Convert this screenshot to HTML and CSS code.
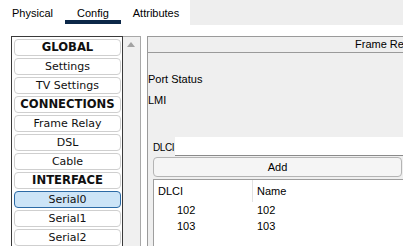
FILE: index.html
```html
<!DOCTYPE html>
<html lang="en">
<head>
    <meta charset="UTF-8">
    <meta name="viewport" content="width=device-width, initial-scale=1.0">
    <title>Router Config</title>
    <link rel="stylesheet" href="styles.css">
</head>
<body>
    <div class="tab-bar">
        <div class="tabs">
            <div class="tab">Physical</div>
            <div class="tab active">Config</div>
            <div class="tab">Attributes</div>
        </div>
    </div>

    <div class="main">
        <div class="side">
            <div class="side-list">
                <div class="side-item heading">GLOBAL</div>
                <div class="side-item">Settings</div>
                <div class="side-item">TV Settings</div>
                <div class="side-item heading">CONNECTIONS</div>
                <div class="side-item">Frame Relay</div>
                <div class="side-item">DSL</div>
                <div class="side-item">Cable</div>
                <div class="side-item heading">INTERFACE</div>
                <div class="side-item selected">Serial0</div>
                <div class="side-item">Serial1</div>
                <div class="side-item">Serial2</div>
            </div>
            <div class="scrollbar">
                <div class="arrow-up"></div>
            </div>
        </div>

        <div class="panel">
            <div class="panel-header">
                <span class="panel-title">Frame Relay</span>
            </div>
            <div class="panel-body">
                <div class="status-row">Port Status</div>
                <div class="status-row">LMI</div>

                <div class="dlci-row">
                    <label class="dlci-label">DLCI</label>
                    <input class="dlci-input" type="text">
                </div>
                <button class="add-btn">Add</button>

                <div class="dlci-table">
                    <div class="table-head">
                        <div class="cell col-dlci">DLCI</div>
                        <div class="cell col-name">Name</div>
                    </div>
                    <div class="table-row">
                        <div class="cell col-dlci num">102</div>
                        <div class="cell col-name">102</div>
                    </div>
                    <div class="table-row">
                        <div class="cell col-dlci num">103</div>
                        <div class="cell col-name">103</div>
                    </div>
                </div>
            </div>
        </div>
    </div>
</body>
</html>
```

FILE: styles.css
```css
body {
    margin: 0;
    width: 403px;
    height: 246px;
    overflow: hidden;
    background-color: #fff;
    font-family: "Liberation Sans", Arial, sans-serif;
    font-size: 11px;
    color: #000;
}

/* tabs */
.tab-bar {
    height: 25px;
    background-color: #eeeeee;
}
.tabs {
    display: flex;
    width: 190px;
    height: 25px;
    background-color: #fff;
}
.tab {
    box-sizing: border-box;
    height: 24px;
    padding: 7px 12px 0;
    line-height: 12px;
}
.tab.active {
    border-bottom: 4px solid #0c2748;
}

.main {
    display: flex;
    margin-top: 11px;
    padding-left: 11px;
    gap: 6px;
}

/* left list */
.side {
    display: flex;
    height: 210px;
}
.side-list {
    box-sizing: border-box;
    width: 112px;
    height: 212px;
    border: 1px solid #3a3a3a;
    border-bottom: none;
    padding: 2px 1px 0 2px;
    background-color: #fff;
    font-family: "DejaVu Sans", Tahoma, sans-serif;
    font-size: 11px;
}
.side-item {
    box-sizing: border-box;
    height: 17px;
    margin-bottom: 2px;
    border: 1px solid #cfcfcf;
    border-radius: 4px;
    text-align: center;
    line-height: 15px;
    color: #101010;
}
.side-item.heading {
    font-weight: bold;
    font-size: 11.6px;
}
.side-item.selected {
    background-color: #cce4f7;
    border-color: #2c6aa5;
}
.scrollbar {
    box-sizing: border-box;
    width: 18px;
    height: 212px;
    border-top: 1px solid #a8a8a8;
    border-right: 1px solid #a8a8a8;
    background-color: #f0f0f0;
    padding: 5px 0 0 4px;
}
.arrow-up {
    width: 0;
    height: 0;
    border-left: 4px solid transparent;
    border-right: 4px solid transparent;
    border-bottom: 5px solid #a3a3a3;
}

/* right panel */
.panel {
    flex: 1;
    height: 212px;
    border-top: 1px solid #9a9a9a;
    border-left: 1px solid #9a9a9a;
    background-color: #efefef;
    overflow: hidden;
}
.panel-header {
    height: 15px;
    border-bottom: 1px solid #9a9a9a;
    padding-left: 207px;
    white-space: nowrap;
    line-height: 15px;
}
.panel-body {
    display: flex;
    flex-direction: column;
}
.status-row {
    height: 21px;
    line-height: 21px;
}
.status-row:first-child {
    margin-top: 16px;
}
.dlci-row {
    display: flex;
    margin-top: 26px;
    padding-left: 5px;
    height: 19px;
}
.dlci-label {
    width: 22px;
    line-height: 22px;
    font-size: 10px;
    letter-spacing: -0.4px;
    white-space: nowrap;
}
.dlci-input {
    flex: 1;
    box-sizing: border-box;
    height: 19px;
    margin: 0;
    border: none;
    border-bottom: 1px solid #8a8a8a;
    background-color: #fff;
}
.add-btn {
    box-sizing: border-box;
    height: 20px;
    margin: 1px 1px 0 5px;
    border: 1px solid #b4b4b4;
    border-radius: 4px;
    background-color: #f5f5f5;
    font-family: "Liberation Sans", Arial, sans-serif;
    font-size: 11px;
    color: #000;
    padding: 0;
}
.dlci-table {
    margin: 2px 0 0 5px;
    height: 70px;
    border-top: 1px solid #9e9e9e;
    border-left: 1px solid #9e9e9e;
    background-color: #fff;
}
.table-head {
    display: flex;
    height: 22px;
    line-height: 22px;
}
.table-head .col-dlci {
    border-right: 1px solid #e2e2e2;
}
.table-row {
    display: flex;
    height: 16px;
    line-height: 16px;
}
.cell {
    padding-left: 4px;
}
.col-dlci {
    box-sizing: border-box;
    width: 99px;
}
.col-dlci.num {
    padding-left: 23px;
}
```
